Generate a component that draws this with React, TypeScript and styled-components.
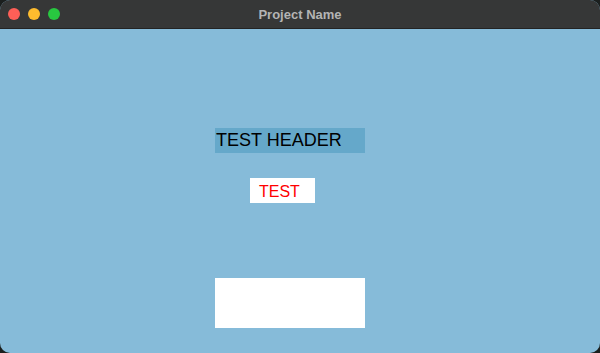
import * as React from 'react';
import styled, { createGlobalStyle } from 'styled-components';

const GlobalStyle = createGlobalStyle`
    html, body {
        margin: 0;
        padding: 0;
        background: #1b1f1e;
    }
    body {
        font-family: 'Liberation Sans', Arial, sans-serif;
    }
`;

const Window = styled.div`
    width: 600px;
    height: 353px;
    border-radius: 10px;
    overflow: hidden;
    display: flex;
    flex-direction: column;
    background: #86bbd9;
    box-sizing: border-box;
`;

const TitleBar = styled.div`
    position: relative;
    height: 28px;
    flex-shrink: 0;
    background: #363737;
    border-top: 1px solid #5a5a5a;
    border-bottom: 1px solid #232323;
    box-sizing: content-box;
    margin-top: -1px;
    display: flex;
    align-items: center;
    justify-content: center;
`;

const Lights = styled.div`
    position: absolute;
    left: 8px;
    top: 8px;
    display: flex;
    gap: 8px;
`;

const Light = styled.span<{ $color: string }>`
    width: 12px;
    height: 12px;
    border-radius: 50%;
    background: ${(props) => props.$color};
`;

const Title = styled.div`
    color: #b4b4b4;
    font-family: 'Liberation Sans', Arial, sans-serif;
    font-weight: bold;
    font-size: 13px;
    padding-top: 1px;
`;

const Body = styled.div`
    flex: 1;
    display: flex;
    flex-direction: column;
    align-items: flex-start;
    padding: 99px 0 0 215px;
`;

const Header = styled.div`
    width: 150px;
    height: 25px;
    background: #65a8ca;
    color: #000;
    font-size: 18px;
    line-height: 25px;
    padding-left: 1px;
    box-sizing: border-box;
    white-space: nowrap;
`;

const Label = styled.div`
    margin: 25px 0 0 35px;
    width: 65px;
    height: 25px;
    background: #fff;
    color: #ff0000;
    font-size: 16px;
    line-height: 27px;
    padding-left: 9px;
    box-sizing: border-box;
`;

const Blank = styled.div`
    margin-top: 75px;
    width: 150px;
    height: 50px;
    background: #fff;
`;

export default function App() {
    return (
        <>
            <GlobalStyle />
            <Window>
                <TitleBar>
                    <Lights>
                        <Light $color={'#fe5f57'} />
                        <Light $color={'#febc2e'} />
                        <Light $color={'#28c840'} />
                    </Lights>
                    <Title>Project Name</Title>
                </TitleBar>
                <Body>
                    <Header>TEST HEADER</Header>
                    <Label>TEST</Label>
                    <Blank />
                </Body>
            </Window>
        </>
    );
}
